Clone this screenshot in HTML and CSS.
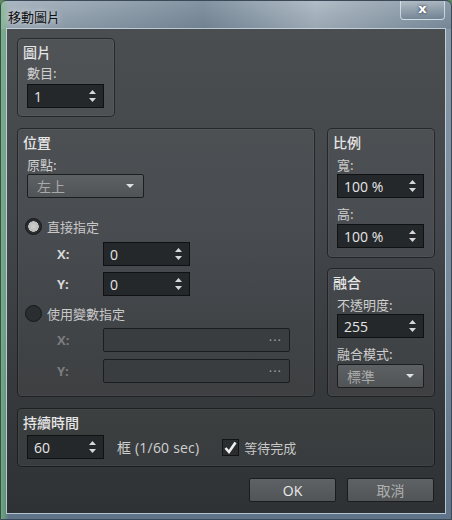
FILE: index.html
```html
<!DOCTYPE html>
<html lang="zh-TW">
<head>
    <meta charset="UTF-8">
    <title>移動圖片</title>
    <link rel="stylesheet" href="styles.css">
</head>
<body>
<div class="window">
    <div class="titlebar">
        <span class="title">移動圖片</span>
        <span class="close">x</span>
    </div>
    <div class="client">
        <div class="group g-picture">
            <div class="gtitle">圖片</div>
            <div class="sub">數目:</div>
            <div class="spin w77"><span class="val">1</span><span class="arrows"><svg width="9" height="16" viewBox="0 0 9 16"><path d="M4.5 2 L8 6 L1 6 Z M1 10 L8 10 L4.5 14 Z" fill="#d8d8d8"/></svg></span></div>
        </div>

        <div class="row2">
            <div class="group g-pos">
                <div class="gtitle">位置</div>
                <div class="sub">原點:</div>
                <div class="combo w117"><span class="cval">左上</span><span class="drop"></span></div>

                <div class="radio-row r1"><span class="radio on"></span><span class="rtext">直接指定</span></div>
                <div class="xy first"><span class="xylabel">X:</span><div class="spin w87"><span class="val">0</span><span class="arrows"><svg width="9" height="16" viewBox="0 0 9 16"><path d="M4.5 2 L8 6 L1 6 Z M1 10 L8 10 L4.5 14 Z" fill="#d8d8d8"/></svg></span></div></div>
                <div class="xy"><span class="xylabel">Y:</span><div class="spin w87"><span class="val">0</span><span class="arrows"><svg width="9" height="16" viewBox="0 0 9 16"><path d="M4.5 2 L8 6 L1 6 Z M1 10 L8 10 L4.5 14 Z" fill="#d8d8d8"/></svg></span></div></div>

                <div class="radio-row r2"><span class="radio"></span><span class="rtext">使用變數指定</span></div>
                <div class="xy vx"><span class="xylabel off">X:</span><div class="varbox"><span class="dots">···</span></div></div>
                <div class="xy vy"><span class="xylabel off">Y:</span><div class="varbox"><span class="dots">···</span></div></div>
            </div>

            <div class="rcol">
                <div class="group g-scale">
                    <div class="gtitle">比例</div>
                    <div class="sub">寬:</div>
                    <div class="spin w87"><span class="val">100 %</span><span class="arrows"><svg width="9" height="16" viewBox="0 0 9 16"><path d="M4.5 2 L8 6 L1 6 Z M1 10 L8 10 L4.5 14 Z" fill="#d8d8d8"/></svg></span></div>
                    <div class="sub s2">高:</div>
                    <div class="spin w87 near"><span class="val">100 %</span><span class="arrows"><svg width="9" height="16" viewBox="0 0 9 16"><path d="M4.5 2 L8 6 L1 6 Z M1 10 L8 10 L4.5 14 Z" fill="#d8d8d8"/></svg></span></div>
                </div>
                <div class="group g-blend">
                    <div class="gtitle">融合</div>
                    <div class="sub">不透明度:</div>
                    <div class="spin w87"><span class="val">255</span><span class="arrows"><svg width="9" height="16" viewBox="0 0 9 16"><path d="M4.5 2 L8 6 L1 6 Z M1 10 L8 10 L4.5 14 Z" fill="#d8d8d8"/></svg></span></div>
                    <div class="sub s2">融合模式:</div>
                    <div class="combo w87 near"><span class="cval">標準</span><span class="drop"></span></div>
                </div>
            </div>
        </div>

        <div class="group g-dur">
            <div class="gtitle">持續時間</div>
            <div class="durrow">
                <div class="spin w77"><span class="val">60</span><span class="arrows"><svg width="9" height="16" viewBox="0 0 9 16"><path d="M4.5 2 L8 6 L1 6 Z M1 10 L8 10 L4.5 14 Z" fill="#d8d8d8"/></svg></span></div>
                <span class="frames">框 (1/60 sec)</span>
                <span class="check"><svg width="15" height="15" viewBox="0 0 15 15"><path d="M2.5 8 L6 12 L12.5 2.5" fill="none" stroke="#f0f0f0" stroke-width="2.6"/></svg></span>
                <span class="ctext">等待完成</span>
            </div>
        </div>

        <div class="buttons">
            <button class="btn ok">OK</button>
            <button class="btn cancel">取消</button>
        </div>
    </div>
</div>
</body>
</html>
```

FILE: styles.css
```css
body {
    margin: 0;
    width: 452px;
    height: 520px;
    overflow: hidden;
    font-family: "Open Sans", "Noto Sans CJK TC", sans-serif;
    font-size: 13px;
    background: #5c8a5c;
}
.window {
    width: 452px;
    height: 520px;
    box-sizing: border-box;
    border: 1px solid #3a4a58;
    border-radius: 6px 6px 0 0;
    background:
        linear-gradient(90deg, rgba(110, 190, 110, 0.75) 0, rgba(110, 190, 110, 0) 8px),
        linear-gradient(180deg, #a3b1bd 0, #8696a4 30px, #74889a 60%, #5f7488 100%);
    display: flex;
    flex-direction: column;
}
.titlebar {
    height: 28px;
    display: flex;
    align-items: flex-start;
    justify-content: space-between;
    background: linear-gradient(90deg, rgba(255,255,255,0.1) 0, rgba(40,60,80,0.25) 45%, rgba(255,255,255,0.15) 70%, rgba(40,60,80,0.2) 100%);
}
.title {
    margin: 6px 0 0 7px;
    font-family: "Noto Sans CJK TC", sans-serif;
    font-size: 13px;
    color: #111;
    text-shadow: 0 0 6px rgba(255, 255, 255, 0.8);
}
.close {
    width: 45px;
    height: 19px;
    margin-right: 6px;
    box-sizing: border-box;
    border: 1px solid rgba(230, 240, 250, 0.7);
    border-top: none;
    border-radius: 0 0 4px 4px;
    background: linear-gradient(180deg, rgba(255,255,255,0.25), rgba(80,100,120,0.3));
    color: #fff;
    font-family: "DejaVu Sans", sans-serif;
    font-weight: bold;
    font-size: 13px;
    line-height: 16px;
    text-align: center;
    text-shadow: 0 0 3px #223;
}
.client {
    margin: 0 6px 0 6px;
    height: 484px;
    box-sizing: border-box;
    padding: 9px 10px 0;
    background: linear-gradient(180deg, #4b4e50 0, #43464a 40%, #35383a 80%, #2f3234 100%);
    box-shadow: 0 0 0 1px rgba(215, 230, 240, 0.7);
    color: #d4d4d4;
}
.group {
    box-sizing: border-box;
    border: 1px solid rgba(0, 0, 0, 0.5);
    border-radius: 5px;
    background: rgba(255, 255, 255, 0.035);
    box-shadow: inset 0 0 0 1px rgba(255, 255, 255, 0.04);
    padding: 5px 0 0 9px;
}
.gtitle {
    margin-left: -4px;
    line-height: 16px;
    font-family: "Noto Sans CJK TC", sans-serif;
    font-size: 14px;
    font-weight: 500;
    color: #e6e6e6;
}
.sub {
    margin-top: 7px;
    line-height: 16px;
    color: #cfcfcf;
    font-family: "Noto Sans CJK TC", sans-serif;
}
.g-picture .sub { margin-top: 5px; }
.g-picture {
    width: 98px;
    height: 79px;
}
.spin, .combo, .varbox {
    height: 24px;
    box-sizing: border-box;
    display: flex;
    align-items: center;
    justify-content: space-between;
    margin-top: 2px;
}
.g-picture .spin { margin-top: 3px; }
.spin {
    background: #25282a;
    border: 1px solid #0f1112;
    padding: 0 6px 0 6px;
    color: #e6e6e6;
    font-size: 14px;
}
.arrows {
    display: flex;
    align-items: center;
}
.w77 { width: 77px; }
.w87 { width: 87px; }
.w117 { width: 117px; }
.combo {
    margin-top: 1px;
    background: linear-gradient(180deg, #5e6163, #515456);
    border: 1px solid #1c1e20;
    border-radius: 2px;
    padding: 0 9px 0 9px;
    color: #a9a9a9;
    font-family: "Noto Sans CJK TC", sans-serif;
    font-size: 14px;
}
.combo.near { margin-top: 2px; }
.drop {
    width: 0;
    height: 0;
    border-left: 4px solid transparent;
    border-right: 4px solid transparent;
    border-top: 4px solid #e0e0e0;
}
.row2 {
    display: flex;
    margin-top: 11px;
}
.g-pos {
    width: 298px;
    height: 269px;
}
.radio-row {
    display: flex;
    align-items: center;
    height: 18px;
    margin-left: -2px;
    font-family: "Noto Sans CJK TC", sans-serif;
}
.r1 { margin-top: 19px; }
.r2 { margin-top: 8px; }
.radio {
    width: 17px;
    height: 17px;
    box-sizing: border-box;
    border-radius: 50%;
    border: 1px solid #151718;
    background: #2b2e30;
}
.radio.on {
    background: radial-gradient(circle, #cfcfcf 0, #bcbcbc 5px, #2b2e30 5.5px);
}
.rtext {
    margin-left: 5px;
    color: #c8c8c8;
}
.xy {
    display: flex;
    align-items: center;
    margin-top: 6px;
}
.xy.first { margin-top: 7px; }
.xy.vx { margin-top: 6px; }
.xy.vy { margin-top: 7px; }
.xylabel {
    width: 46px;
    padding-left: 30px;
    font-weight: bold;
    font-size: 13px;
    color: #d8d8d8;
}
.xylabel.off {
    color: #7c7e80;
}
.xy .spin, .xy .varbox { margin-top: 0; }
.varbox {
    width: 187px;
    background: #3a3d3f;
    border: 1px solid #1b1d1f;
    border-radius: 2px;
    justify-content: flex-end;
    padding-right: 7px;
}
.dots {
    color: #a0a0a0;
    font-size: 13px;
    letter-spacing: 1px;
}
.rcol {
    margin-left: 12px;
    display: flex;
    flex-direction: column;
}
.g-scale {
    width: 108px;
    height: 130px;
}
.g-blend {
    width: 108px;
    height: 129px;
    margin-top: 10px;
}
.sub.s2 { margin-top: 8px; }
.g-scale .sub { margin-top: 7px; }
.g-scale .sub.s2 { margin-top: 8px; }
.spin.near { margin-top: 2px; }
.g-scale .spin, .g-blend .spin { margin-top: 1px; }
.g-scale .spin.near { margin-top: 2px; }
.g-dur {
    width: 418px;
    height: 59px;
    margin-top: 11px;
}
.durrow {
    display: flex;
    align-items: center;
    margin-top: 5px;
}
.durrow .spin { margin-top: 0; }
.frames {
    margin-left: 13px;
    color: #cfcfcf;
    font-size: 14px;
    letter-spacing: 0.2px;
}
.check {
    width: 17px;
    height: 17px;
    box-sizing: border-box;
    margin-left: 23px;
    background: #2a2d2f;
    border: 1px solid #121415;
    display: flex;
    align-items: center;
    justify-content: center;
}
.ctext {
    margin-left: 5px;
    color: #c8c8c8;
    font-family: "Noto Sans CJK TC", sans-serif;
}
.buttons {
    display: flex;
    justify-content: flex-end;
    gap: 11px;
    margin-top: 11px;
    margin-right: 1px;
}
.btn {
    width: 87px;
    height: 24px;
    box-sizing: border-box;
    border: 1px solid #1a1c1e;
    border-radius: 2px;
    background: linear-gradient(180deg, #5f6264, #525557);
    font-family: "Open Sans", "Noto Sans CJK TC", sans-serif;
    font-size: 14px;
    padding: 0;
}
.btn.ok { color: #ececec; }
.btn.cancel { color: #aeaeae; font-size: 14px; }
```
